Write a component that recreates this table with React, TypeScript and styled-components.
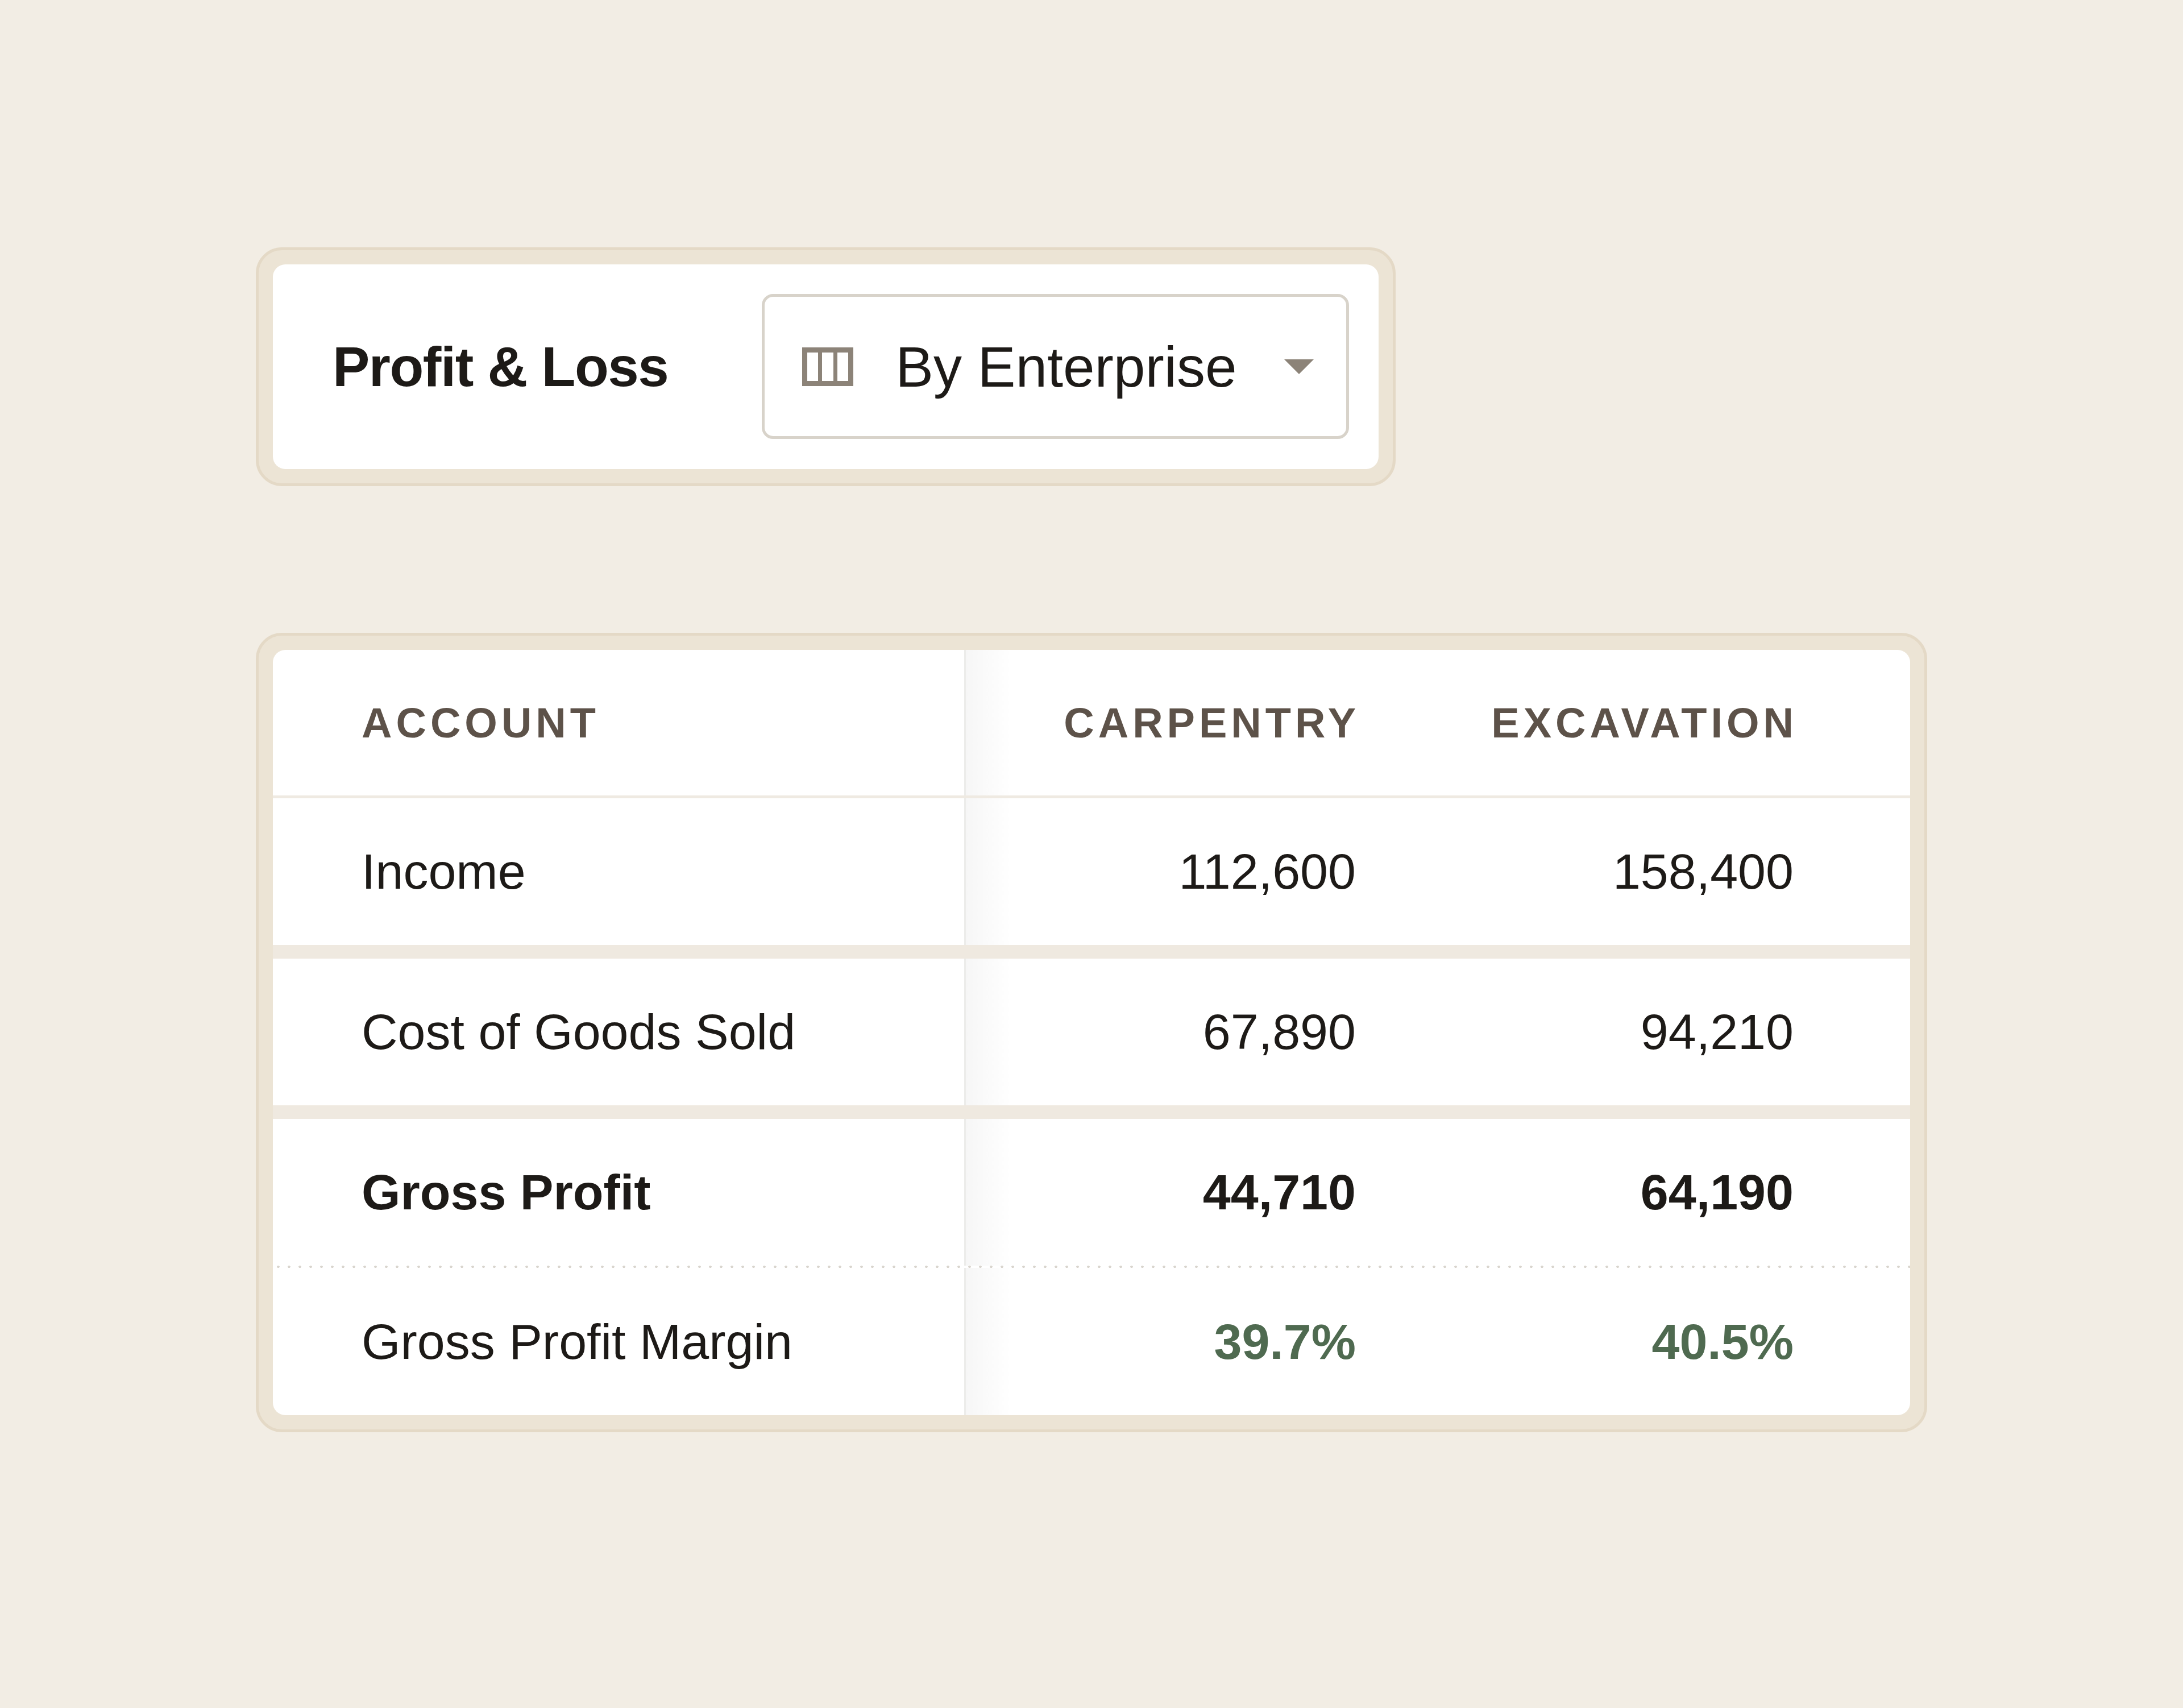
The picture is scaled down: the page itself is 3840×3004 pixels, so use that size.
import React from 'react';
import styled, { createGlobalStyle } from 'styled-components';

const GlobalStyle = createGlobalStyle`
    html, body {
        margin: 0;
        padding: 0;
        background: #f2ede4;
    }
    * { box-sizing: border-box; }
`;

interface PlRow {
    account: string;
    carpentry: string;
    excavation: string;
    kind?: 'bold' | 'margin';
}

const rows: PlRow[] = [
    { account: 'Income', carpentry: '112,600', excavation: '158,400' },
    { account: 'Cost of Goods Sold', carpentry: '67,890', excavation: '94,210' },
    { account: 'Gross Profit', carpentry: '44,710', excavation: '64,190', kind: 'bold' },
    { account: 'Gross Profit Margin', carpentry: '39.7%', excavation: '40.5%', kind: 'margin' },
];

const ColumnsIcon = () => (
    <svg width="90" height="68" viewBox="0 0 90 68">
        <path
            fillRule="evenodd"
            fill="#8c8378"
            d="M0 0H90V68H0Z M9 9V59H28V9Z M35 9V59H55V9Z M62 9V59H81V9Z"
        />
    </svg>
);

const Caret = () => (
    <svg width="52" height="26" viewBox="0 0 52 26">
        <path d="M0 0H52L26 26Z" fill="#8c8378" />
    </svg>
);

export default function App() {
    return (
        <Page>
            <GlobalStyle />
            <Frame>
                <TopBar>
                    <Title>Profit &amp; Loss</Title>
                    <Dropdown>
                        <ColumnsIcon />
                        <DropdownLabel>By Enterprise</DropdownLabel>
                        <CaretSlot>
                            <Caret />
                        </CaretSlot>
                    </Dropdown>
                </TopBar>
            </Frame>

            <Frame>
                <TableCard>
                    <Row $height={256}>
                        <HeadCell>Account</HeadCell>
                        <HeadCell $numeric $divider>Carpentry</HeadCell>
                        <HeadCell $numeric>Excavation</HeadCell>
                    </Row>
                    <HeaderLine />
                    {rows.map((row, i) => (
                        <React.Fragment key={row.account}>
                            <Row $height={i === 3 ? 259 : 258}>
                                <Cell $weight={row.kind === 'bold' ? 700 : 400}>{row.account}</Cell>
                                <Cell
                                    $numeric
                                    $divider
                                    $weight={row.kind ? 700 : 400}
                                    $green={row.kind === 'margin'}
                                >
                                    {row.carpentry}
                                </Cell>
                                <Cell
                                    $numeric
                                    $weight={row.kind ? 700 : 400}
                                    $green={row.kind === 'margin'}
                                >
                                    {row.excavation}
                                </Cell>
                            </Row>
                            {i < 2 && <Band />}
                            {i === 2 && <Dotted />}
                        </React.Fragment>
                    ))}
                </TableCard>
            </Frame>
        </Page>
    );
}

const Page = styled.div`
    min-height: 3004px;
    padding: 435px 0 0 450px;
    background: #f2ede4;
    display: flex;
    flex-direction: column;
    align-items: flex-start;
    gap: 258px;
    font-family: "Liberation Sans", Arial, sans-serif;
    color: #1d1a17;
`;

const Frame = styled.div`
    background: #ece4d5;
    border: 5px solid #e4d9c6;
    border-radius: 46px;
    padding: 25px;
`;

const Card = styled.div`
    background: #ffffff;
    border-radius: 22px;
`;

const TopBar = styled(Card)`
    display: flex;
    align-items: center;
    gap: 165px;
    padding: 52px 52px 53px 105px;
`;

const Title = styled.h1`
    margin: 0;
    font-size: 98px;
    font-weight: 700;
    line-height: 1;
    letter-spacing: -1.5px;
    white-space: nowrap;
`;

const Dropdown = styled.div`
    width: 1033px;
    height: 255px;
    border: 5px solid #d8d3ca;
    border-radius: 20px;
    display: flex;
    align-items: center;
    gap: 74px;
    padding: 0 57px 0 66px;
`;

const DropdownLabel = styled.span`
    font-size: 100px;
    line-height: 1;
    white-space: nowrap;
`;

const CaretSlot = styled.span`
    margin-left: auto;
    display: flex;
`;

const TableCard = styled(Card)`
    width: 2880px;
    overflow: hidden;
`;

const Row = styled.div<{ $height: number }>`
    display: grid;
    grid-template-columns: 1216px 894px 770px;
    height: ${p => p.$height}px;
`;

const BaseCell = styled.div<{ $numeric?: boolean; $divider?: boolean }>`
    display: flex;
    align-items: center;
    justify-content: ${p => (p.$numeric ? 'flex-end' : 'flex-start')};
    padding: ${p => (p.$numeric ? '0 205px 0 0' : '0 0 0 156px')};
    white-space: nowrap;
    ${p =>
        p.$divider &&
        `
        border-left: 3px solid #ececea;
        background: linear-gradient(90deg, rgba(0, 0, 0, 0.035), rgba(0, 0, 0, 0) 80px);
    `}
`;

const HeadCell = styled(BaseCell)`
    font-size: 74px;
    font-weight: 700;
    letter-spacing: 7px;
    text-transform: uppercase;
    color: #5d5249;
    margin-right: -7px;
`;

const Cell = styled(BaseCell)<{ $weight: number; $green?: boolean }>`
    font-size: 88px;
    font-weight: ${p => p.$weight};
    color: ${p => (p.$green ? '#4f6a50' : '#1d1a17')};
`;

const HeaderLine = styled.div`
    height: 5px;
    background: #efeae2;
`;

const Band = styled.div`
    height: 24px;
    background: #efe9e0;
`;

const Dotted = styled.div`
    height: 4px;
    background-image: radial-gradient(circle, #d9d5ce 2px, transparent 2.5px);
    background-size: 19px 4px;
    background-repeat: repeat-x;
`;
